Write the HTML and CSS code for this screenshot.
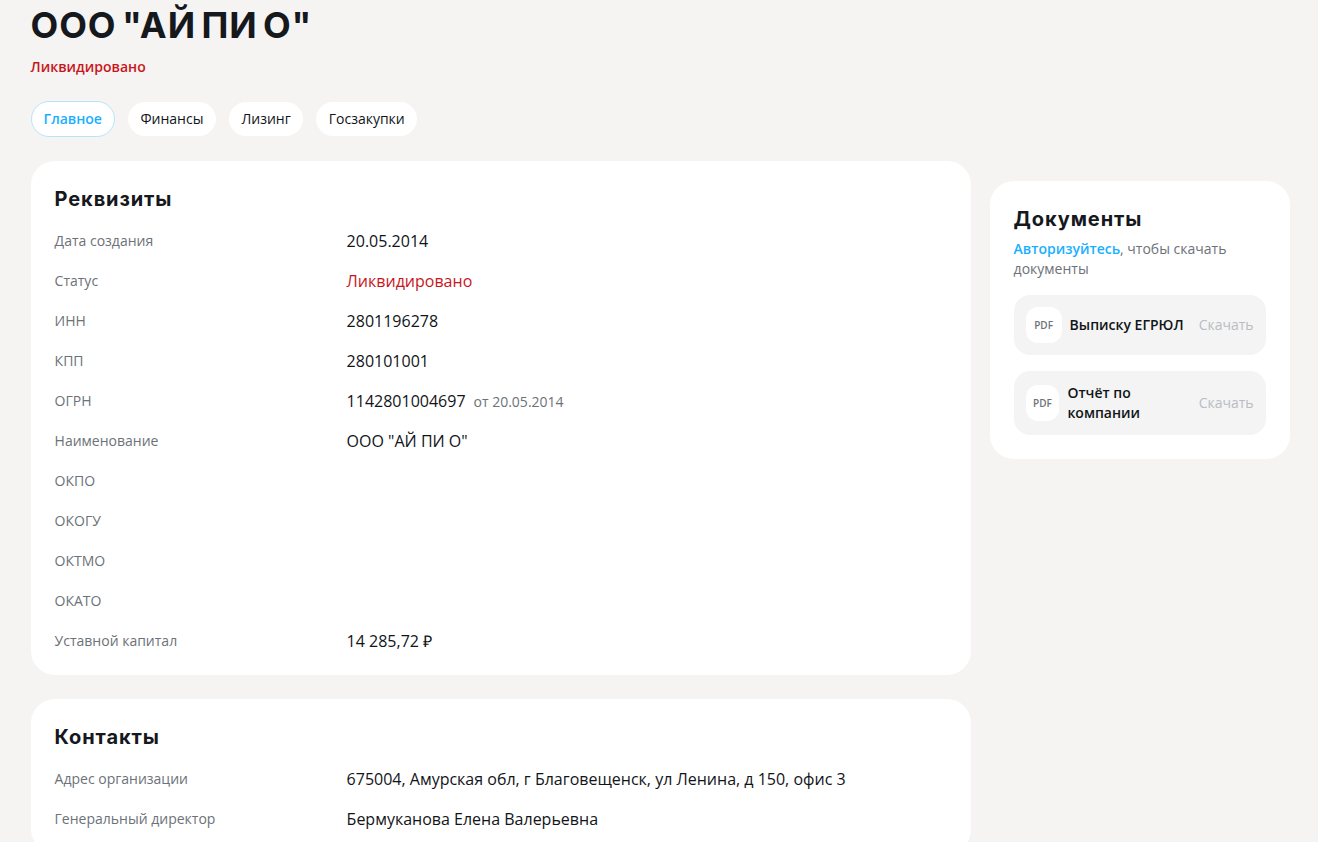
FILE: index.html
```html
<!DOCTYPE html>
<html lang="ru">
<head>
    <meta charset="UTF-8">
    <meta name="viewport" content="width=device-width, initial-scale=1.0">
    <title>ООО "АЙ ПИ О"</title>
    <link rel="stylesheet" href="styles.css">
</head>
<body>
<div class="container">
    <h1 class="company-name">ООО "АЙ ПИ О"</h1>
    <p class="company-status">Ликвидировано</p>
    <nav class="tabs">
        <a class="tab active" href="#">Главное</a>
        <a class="tab" href="#">Финансы</a>
        <a class="tab" href="#">Лизинг</a>
        <a class="tab" href="#">Госзакупки</a>
    </nav>
    <div class="columns">
        <main class="main-col">
            <section class="card">
                <h2 class="card-title">Реквизиты</h2>
                <div class="row"><span class="row-label">Дата создания</span><span class="row-value">20.05.2014</span></div>
                <div class="row"><span class="row-label">Статус</span><span class="row-value red">Ликвидировано</span></div>
                <div class="row"><span class="row-label">ИНН</span><span class="row-value">2801196278</span></div>
                <div class="row"><span class="row-label">КПП</span><span class="row-value">280101001</span></div>
                <div class="row"><span class="row-label">ОГРН</span><span class="row-value">1142801004697<small class="row-note">от 20.05.2014</small></span></div>
                <div class="row"><span class="row-label">Наименование</span><span class="row-value">ООО "АЙ ПИ О"</span></div>
                <div class="row"><span class="row-label">ОКПО</span><span class="row-value"></span></div>
                <div class="row"><span class="row-label">ОКОГУ</span><span class="row-value"></span></div>
                <div class="row"><span class="row-label">ОКТМО</span><span class="row-value"></span></div>
                <div class="row"><span class="row-label">ОКАТО</span><span class="row-value"></span></div>
                <div class="row"><span class="row-label">Уставной капитал</span><span class="row-value">14 285,72 ₽</span></div>
            </section>
            <section class="card">
                <h2 class="card-title">Контакты</h2>
                <div class="row"><span class="row-label">Адрес организации</span><span class="row-value">675004, Амурская обл, г Благовещенск, ул Ленина, д 150, офис 3</span></div>
                <div class="row"><span class="row-label">Генеральный директор</span><span class="row-value">Бермуканова Елена Валерьевна</span></div>
            </section>
        </main>
        <aside class="side-col">
            <section class="card docs">
                <h2 class="card-title">Документы</h2>
                <p class="docs-hint"><a href="#">Авторизуйтесь</a>, чтобы скачать документы</p>
                <div class="doc">
                    <span class="doc-icon">PDF</span>
                    <span class="doc-name">Выписку ЕГРЮЛ</span>
                    <span class="doc-link">Скачать</span>
                </div>
                <div class="doc">
                    <span class="doc-icon">PDF</span>
                    <span class="doc-name">Отчёт по компании</span>
                    <span class="doc-link">Скачать</span>
                </div>
            </section>
        </aside>
    </div>
</div>
</body>
</html>
```
FILE: styles.css
```css
html, body {
    height: 100%;
    margin: 0;
    overflow: hidden;
}

body {
    background: #f6f4f2;
    color: #111418;
    font-family: "Open Sans", "Liberation Sans", sans-serif;
}

.container {
    padding: 3px 28px 0 30.6px;
}

.company-name {
    margin: 0;
    font-family: Inter, "Liberation Sans", sans-serif;
    font-size: 36px;
    font-weight: 700;
    letter-spacing: 0.9px;
    word-spacing: -4px;
    line-height: 44px;
    color: #15181d;
}

.company-status {
    margin: 10px 0 0;
    font-size: 14px;
    font-weight: 600;
    line-height: 20px;
    color: #c8161d;
}

.tabs {
    display: flex;
    align-items: center;
    gap: 13px;
    margin-top: 24px;
}

.tab {
    padding: 7px 12.5px;
    border-radius: 18px;
    background: #fff;
    color: #111418;
    font-size: 14px;
    font-weight: 500;
    line-height: 20px;
    text-decoration: none;
}

.tab.active {
    padding: 7px 12px;
    border: 1px solid #b5e4ff;
    color: #1ab0ff;
    font-weight: 600;
}

.columns {
    display: grid;
    grid-template-columns: 940px 300px;
    gap: 19px;
    margin-top: 24px;
}

.main-col {
    display: flex;
    flex-direction: column;
    gap: 24px;
}

.side-col {
    padding-top: 20px;
}

.card {
    padding: 24px 24px 14px;
    border-radius: 24px;
    background: #fff;
}

.card-title {
    margin: 0;
    font-family: Inter, "Liberation Sans", sans-serif;
    font-size: 20px;
    font-weight: 700;
    letter-spacing: 0.9px;
    line-height: 28px;
    color: #15181d;
}

.card > .card-title + .row {
    margin-top: 8px;
}

.row {
    display: grid;
    grid-template-columns: 292px 1fr;
    align-items: center;
    height: 40px;
}

.row-label {
    font-size: 14px;
    line-height: 20px;
    color: #6c7278;
}

.row-value {
    font-size: 16px;
    line-height: 24px;
}

.row-value.red {
    color: #c8161d;
}

.row-note {
    margin-left: 8px;
    font-size: 14px;
    color: #6c7278;
}

.docs {
    padding-bottom: 24px;
}

.docs-hint {
    margin: 6px 0 16px;
    font-size: 14px;
    line-height: 20px;
    color: #6c7278;
}

.docs-hint a {
    color: #1ab0ff;
    font-weight: 600;
    text-decoration: none;
}

.doc {
    display: flex;
    align-items: center;
    justify-content: space-between;
    padding: 12px;
    border-radius: 16px;
    background: #f4f4f4;
}

.doc + .doc {
    margin-top: 16px;
}

.doc-icon {
    display: flex;
    align-items: center;
    justify-content: center;
    width: 36px;
    height: 36px;
    border-radius: 12px;
    background: #fff;
    color: #6c7278;
    font-size: 10px;
    font-weight: 600;
}

.doc-name {
    margin: 0 auto 0 8px;
    font-size: 14px;
    font-weight: 600;
    line-height: 20px;
}

.doc-link {
    font-size: 14px;
    line-height: 20px;
    color: #b9bdc1;
}
```
